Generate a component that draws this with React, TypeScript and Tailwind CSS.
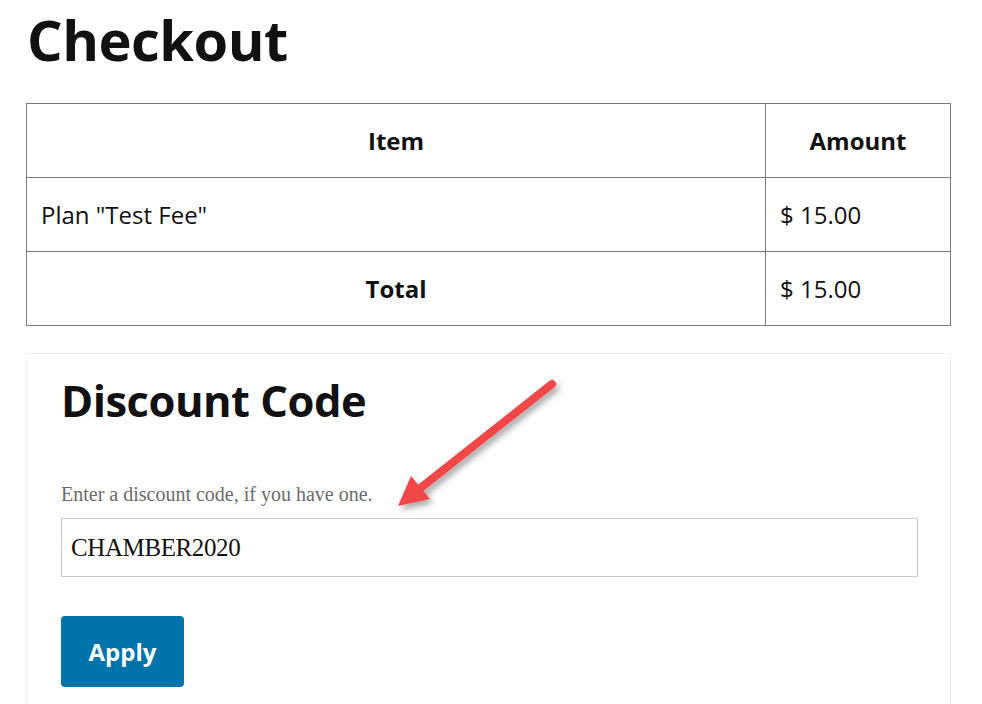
import React from "react";

const SANS = { fontFamily: '"Open Sans", "Noto Sans", sans-serif' };
const SERIF = { fontFamily: '"Liberation Serif", "DejaVu Serif", serif' };

function Arrow() {
  return (
    <svg className="pointer-events-none absolute left-0 top-0" width="982" height="704" viewBox="0 0 982 704">
      <defs>
        <filter id="sh" x="-20%" y="-20%" width="140%" height="140%">
          <feDropShadow dx="3" dy="4" stdDeviation="3" floodColor="#000" floodOpacity="0.35" />
        </filter>
      </defs>
      <g filter="url(#sh)">
        <line x1="552" y1="384" x2="418" y2="490" stroke="#f24648" strokeWidth="8" strokeLinecap="round" />
        <polygon points="398,506 411,476 430,499" fill="#f24648" />
      </g>
    </svg>
  );
}

export default function App() {
  return (
    <div className="relative h-[704px] w-[982px] overflow-hidden bg-white text-[#111]" style={SANS}>
      <div className="px-[26px] pt-[6px]">
        <h1 className="pl-[1px] text-[56px] font-bold leading-[1.2] tracking-[-0.5px]">Checkout</h1>

        <table className="mt-[30px] w-[925px] border-collapse text-[24px]">
          <tbody>
            <tr className="h-[74px]">
              <th className="border border-[#7a7a7a] text-center font-bold">Item</th>
              <th className="w-[185px] border border-[#7a7a7a] text-center font-bold">Amount</th>
            </tr>
            <tr className="h-[74px]">
              <td className="border border-[#7a7a7a] px-[14px]">Plan "Test Fee"</td>
              <td className="border border-[#7a7a7a] px-[14px]">$ 15.00</td>
            </tr>
            <tr className="h-[74px]">
              <th className="border border-[#7a7a7a] text-center font-bold">Total</th>
              <td className="border border-[#7a7a7a] px-[14px]">$ 15.00</td>
            </tr>
          </tbody>
        </table>

        <div className="mt-[27px] h-[400px] w-[925px] border border-[#ededed] px-[34px] pt-[21px]">
          <h2 className="text-[43.5px] font-bold leading-[1.2] tracking-[-0.5px]">Discount Code</h2>
          <p className="mt-[55px] text-[20px] leading-[1.2] text-[#6b6b6b]" style={SERIF}>
            Enter a discount code, if you have one.
          </p>
          <div
            className="mt-[12px] flex h-[59px] w-[857px] items-center border border-[#cccccc] px-[9px] text-[25px] tracking-[-0.4px] text-[#111]"
            style={SERIF}
          >
            CHAMBER2020
          </div>
          <button
            type="button"
            className="mt-[39px] flex h-[71px] w-[123px] items-center justify-center rounded-[4px] bg-[#0073aa] text-[24px] font-bold text-white"
          >
            Apply
          </button>
        </div>
      </div>
      <Arrow />
    </div>
  );
}
